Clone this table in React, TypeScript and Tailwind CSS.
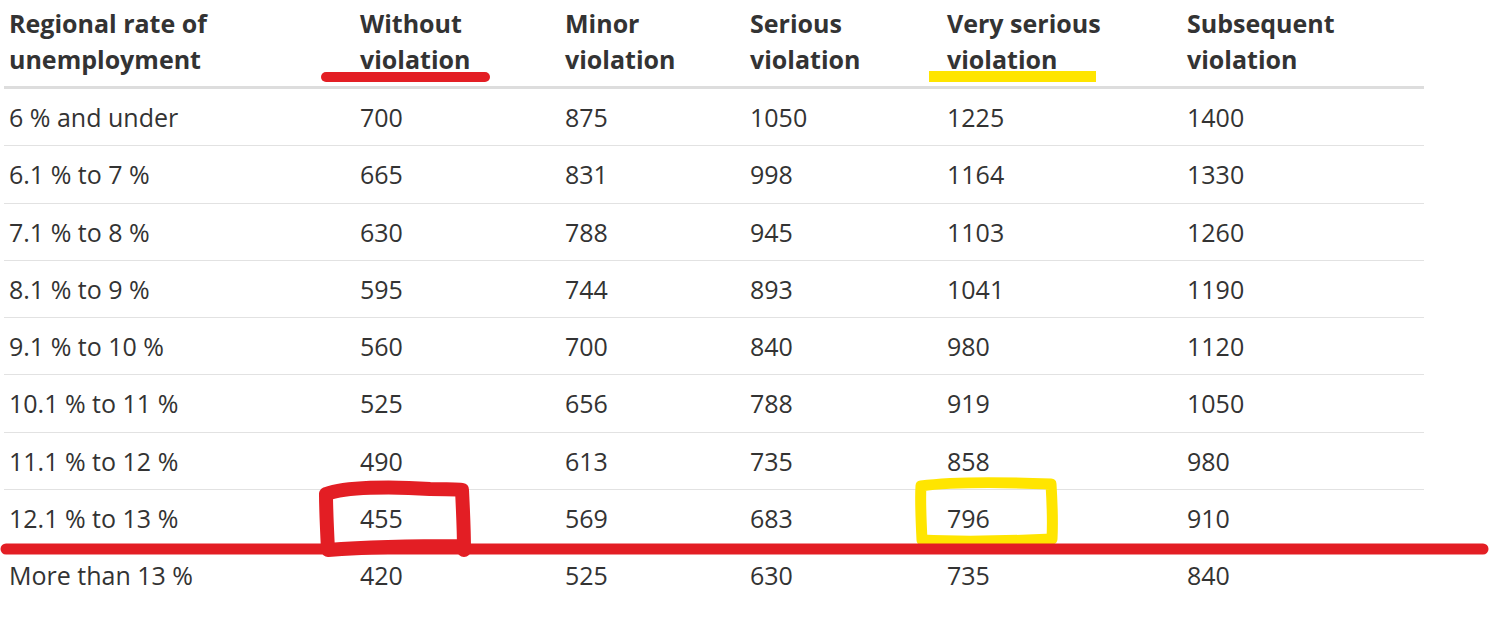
import React from 'react';

const headers = [
  ['Regional rate of', 'unemployment'],
  ['Without', 'violation'],
  ['Minor', 'violation'],
  ['Serious', 'violation'],
  ['Very serious', 'violation'],
  ['Subsequent', 'violation'],
];

const rows: string[][] = [
  ['6 % and under', '700', '875', '1050', '1225', '1400'],
  ['6.1 % to 7 %', '665', '831', '998', '1164', '1330'],
  ['7.1 % to 8 %', '630', '788', '945', '1103', '1260'],
  ['8.1 % to 9 %', '595', '744', '893', '1041', '1190'],
  ['9.1 % to 10 %', '560', '700', '840', '980', '1120'],
  ['10.1 % to 11 %', '525', '656', '788', '919', '1050'],
  ['11.1 % to 12 %', '490', '613', '735', '858', '980'],
  ['12.1 % to 13 %', '455', '569', '683', '796', '910'],
  ['More than 13 %', '420', '525', '630', '735', '840'],
];

const colWidths = ['w-[351px]', 'w-[205px]', 'w-[185px]', 'w-[197px]', 'w-[240px]', 'w-[242px]'];

function Annotations() {
  // hand-drawn marker strokes over the table
  return (
    <svg
      className="absolute inset-0 pointer-events-none"
      width={1489}
      height={624}
      viewBox="0 0 1489 624"
    >
      <rect x={929} y={71} width={167} height={11} fill="#ffe500" />
      <path
        d="M921 486 C 950 482, 1000 482, 1051 484 C 1052 500, 1053 520, 1052 539 C 1010 541, 960 542, 922 540 C 921 520, 920 500, 921 486 Z"
        fill="none"
        stroke="#ffe500"
        strokeWidth={11}
        strokeLinejoin="round"
      />
      <path d="M326 77 L 485 77" stroke="#e31e24" strokeWidth={10} strokeLinecap="round" />
      <path d="M6 549 L 1483 549" stroke="#e31e24" strokeWidth={11} strokeLinecap="round" />
      <path
        d="M326 494 C 345 487, 390 486, 430 489 C 445 489, 455 489, 462 490 C 463 510, 464 530, 464 550 M464 546 C 420 546, 380 546, 328 550 C 327 530, 326 510, 326 494"
        fill="none"
        stroke="#e31e24"
        strokeWidth={14}
        strokeLinecap="round"
        strokeLinejoin="round"
      />
    </svg>
  );
}

export default function App() {
  return (
    <div className="relative w-[1489px] h-[624px] overflow-hidden bg-white font-['Open_Sans',sans-serif] text-[#333333]">
      <table className="ml-[4px] w-[1420px] table-fixed border-collapse">
        <thead>
          <tr className="border-b-[3px] border-[#dddddd]">
            {headers.map((h, i) => (
              <th
                key={i}
                className={`${colWidths[i]} pl-[5px] pt-[5px] pb-[9px] text-left align-top text-[25px] leading-[36px] font-bold`}
              >
                {h[0]}
                <br />
                {h[1]}
              </th>
            ))}
          </tr>
        </thead>
        <tbody>
          {rows.map((r, ri) => (
            <tr key={ri} className={ri < rows.length - 1 ? 'border-b border-[#e2e2e2]' : ''}>
              {r.map((c, ci) => (
                <td key={ci} className="pl-[5px] py-[10px] text-[25px] leading-[36.25px] font-normal">
                  {c}
                </td>
              ))}
            </tr>
          ))}
        </tbody>
      </table>
      <Annotations />
    </div>
  );
}
